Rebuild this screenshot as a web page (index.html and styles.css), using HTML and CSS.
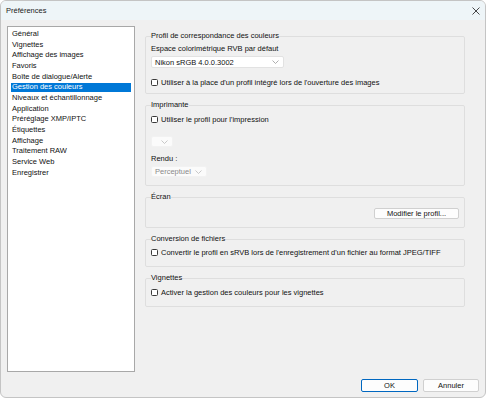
FILE: index.html
```html
<!DOCTYPE html>
<html lang="fr">
<head>
    <meta charset="UTF-8">
    <meta name="viewport" content="width=device-width, initial-scale=1.0">
    <title>Préférences</title>
    <link rel="stylesheet" href="styles.css">
</head>
<body>
<div class="window">
    <!-- barre de titre -->
    <div class="titlebar">
        <span class="title">Préférences</span>
        <svg class="close" width="8" height="8" viewBox="0 0 8 8">
            <path d="M0.5 0.5 L7.5 7.5 M7.5 0.5 L0.5 7.5" stroke="#333" stroke-width="0.9" fill="none"/>
        </svg>
    </div>

    <div class="content">
        <div class="main">
            <!-- liste des catégories -->
            <ul class="categories">
                <li>Général</li>
                <li>Vignettes</li>
                <li>Affichage des images</li>
                <li>Favoris</li>
                <li>Boîte de dialogue/Alerte</li>
                <li class="selected">Gestion des couleurs</li>
                <li>Niveaux et échantillonnage</li>
                <li>Application</li>
                <li>Préréglage XMP/IPTC</li>
                <li>Étiquettes</li>
                <li>Affichage</li>
                <li>Traitement RAW</li>
                <li>Service Web</li>
                <li>Enregistrer</li>
            </ul>

            <!-- panneau gestion des couleurs -->
            <div class="panel">
                <fieldset class="group g-profile">
                    <legend>Profil de correspondance des couleurs</legend>
                    <div class="label first">Espace colorimétrique RVB par défaut</div>
                    <div class="select wide">
                        <span>Nikon sRGB 4.0.0.3002</span>
                        <svg class="chev" width="7" height="4" viewBox="0 0 7 4"><path d="M0.5 0.5 L3.5 3.5 L6.5 0.5" stroke="#999" stroke-width="0.8" fill="none"/></svg>
                    </div>
                    <label class="check row-embedded"><input type="checkbox"><span>Utiliser à la place d'un profil intégré lors de l'ouverture des images</span></label>
                </fieldset>

                <fieldset class="group g-printer">
                    <legend>Imprimante</legend>
                    <label class="check row-print"><input type="checkbox"><span>Utiliser le profil pour l'impression</span></label>
                    <div class="select disabled empty">
                        <span></span>
                        <svg class="chev" width="7" height="4" viewBox="0 0 7 4"><path d="M0.5 0.5 L3.5 3.5 L6.5 0.5" stroke="#bbb" stroke-width="0.8" fill="none"/></svg>
                    </div>
                    <div class="label rendu">Rendu :</div>
                    <div class="select disabled perc">
                        <span>Perceptuel</span>
                        <svg class="chev" width="7" height="4" viewBox="0 0 7 4"><path d="M0.5 0.5 L3.5 3.5 L6.5 0.5" stroke="#bbb" stroke-width="0.8" fill="none"/></svg>
                    </div>
                </fieldset>

                <fieldset class="group g-screen">
                    <legend>Écran</legend>
                    <div class="btn-row">
                        <button class="btn modify">Modifier le profil...</button>
                    </div>
                </fieldset>

                <fieldset class="group g-convert">
                    <legend>Conversion de fichiers</legend>
                    <label class="check row-small"><input type="checkbox"><span>Convertir le profil en sRVB lors de l'enregistrement d'un fichier au format JPEG/TIFF</span></label>
                </fieldset>

                <fieldset class="group g-thumbs">
                    <legend>Vignettes</legend>
                    <label class="check row-small"><input type="checkbox"><span>Activer la gestion des couleurs pour les vignettes</span></label>
                </fieldset>
            </div>
        </div>

        <!-- boutons -->
        <div class="footer">
            <button class="btn ok">OK</button>
            <button class="btn cancel">Annuler</button>
        </div>
    </div>
</div>
</body>
</html>
```

FILE: styles.css
```css
body {
    margin: 0;
    padding: 0;
    background: #ffffff;
    font-family: "Liberation Sans", Arial, sans-serif;
    font-size: 7.5px;
    color: #111;
}

.window {
    width: 486px;
    height: 398px;
    box-sizing: border-box;
    border: 1px solid #c4c4c4;
    border-radius: 6px;
    overflow: hidden;
    background: #f0f0f0;
    display: flex;
    flex-direction: column;
}

.titlebar {
    height: 19px;
    background: #eef5f8;
    display: flex;
    align-items: center;
    justify-content: space-between;
    padding: 0 5px 0 5px;
}

.title {
    font-size: 7.5px;
    color: #222;
}

.content {
    flex: 1;
    display: flex;
    flex-direction: column;
    padding: 6px 0 0 6px;
}

.main {
    display: flex;
    height: 346px;
}

/* liste */
.categories {
    list-style: none;
    margin: 0;
    padding: 3px 0 0 0;
    width: 128px;
    box-sizing: border-box;
    background: #ffffff;
    border: 1px solid #a8a8a8;
}

.categories li {
    height: 8.67px;
    line-height: 8.67px;
    margin: 0 3px 2px 3px;
    padding-left: 1px;
    white-space: nowrap;
}

.categories li.selected {
    background: #0078d7;
    color: #ffffff;
}

/* panneau */
.panel {
    margin-left: 10px;
    width: 320px;
    padding-top: 6px;
    display: flex;
    flex-direction: column;
    gap: 7px;
}

.group {
    margin: 0;
    padding: 0 5px;
    border: 1px solid #dedede;
    border-radius: 2px;
    min-width: 0;
}

.group legend {
    padding: 0;
    line-height: 8px;
    font-size: 7.5px;
}

.label {
    line-height: 10px;
    white-space: nowrap;
}

.g-profile .label.first {
    margin-top: 4px;
}

.select {
    display: flex;
    align-items: center;
    justify-content: space-between;
    box-sizing: border-box;
    background: #ffffff;
    border: 1px solid #e2e2e2;
    border-radius: 2px;
    padding: 0 4px 0 3px;
}

.select.wide {
    width: 133px;
    height: 12px;
    margin-top: 2px;
}

.select.disabled {
    background: #fbfbfb;
    border-color: #f2f2f2;
    color: #8a8a8a;
    height: 11px;
}

.select.empty {
    width: 22px;
    margin-top: 12px;
}

.select.perc {
    width: 56px;
    margin-top: 2px;
}

.rendu {
    margin-top: 7px;
}

.check {
    display: flex;
    align-items: center;
    height: 10px;
    white-space: nowrap;
}

.check input {
    appearance: none;
    -webkit-appearance: none;
    margin: 0 3px 0 0;
    width: 7px;
    height: 7px;
    box-sizing: border-box;
    border: 1px solid #3a3a3a;
    border-radius: 1.5px;
    background: #ffffff;
}

.row-embedded {
    margin-top: 9px;
    margin-bottom: 6px;
}

.row-print {
    margin-top: 5px;
}

.g-printer {
    padding-bottom: 8px;
}

.row-small {
    margin-top: 4px;
    margin-bottom: 9px;
}

.g-thumbs .row-small {
    margin-top: 5px;
}

.btn-row {
    display: flex;
    justify-content: flex-end;
    margin-top: 7px;
    margin-bottom: 8px;
}

.btn {
    font-family: "Liberation Sans", Arial, sans-serif;
    font-size: 7.5px;
    color: #111;
    background: #fdfdfd;
    border: 1px solid #d0d0d0;
    border-radius: 2px;
    padding: 0;
    box-sizing: border-box;
}

.modify {
    width: 85px;
    height: 11px;
}

/* pied */
.footer {
    display: flex;
    justify-content: flex-end;
    gap: 5px;
    padding: 7px 6px 0 0;
}

.ok, .cancel {
    width: 57px;
    height: 13px;
}

.ok {
    border-color: #0067c0;
}

.cancel {
    width: 56px;
}
```
